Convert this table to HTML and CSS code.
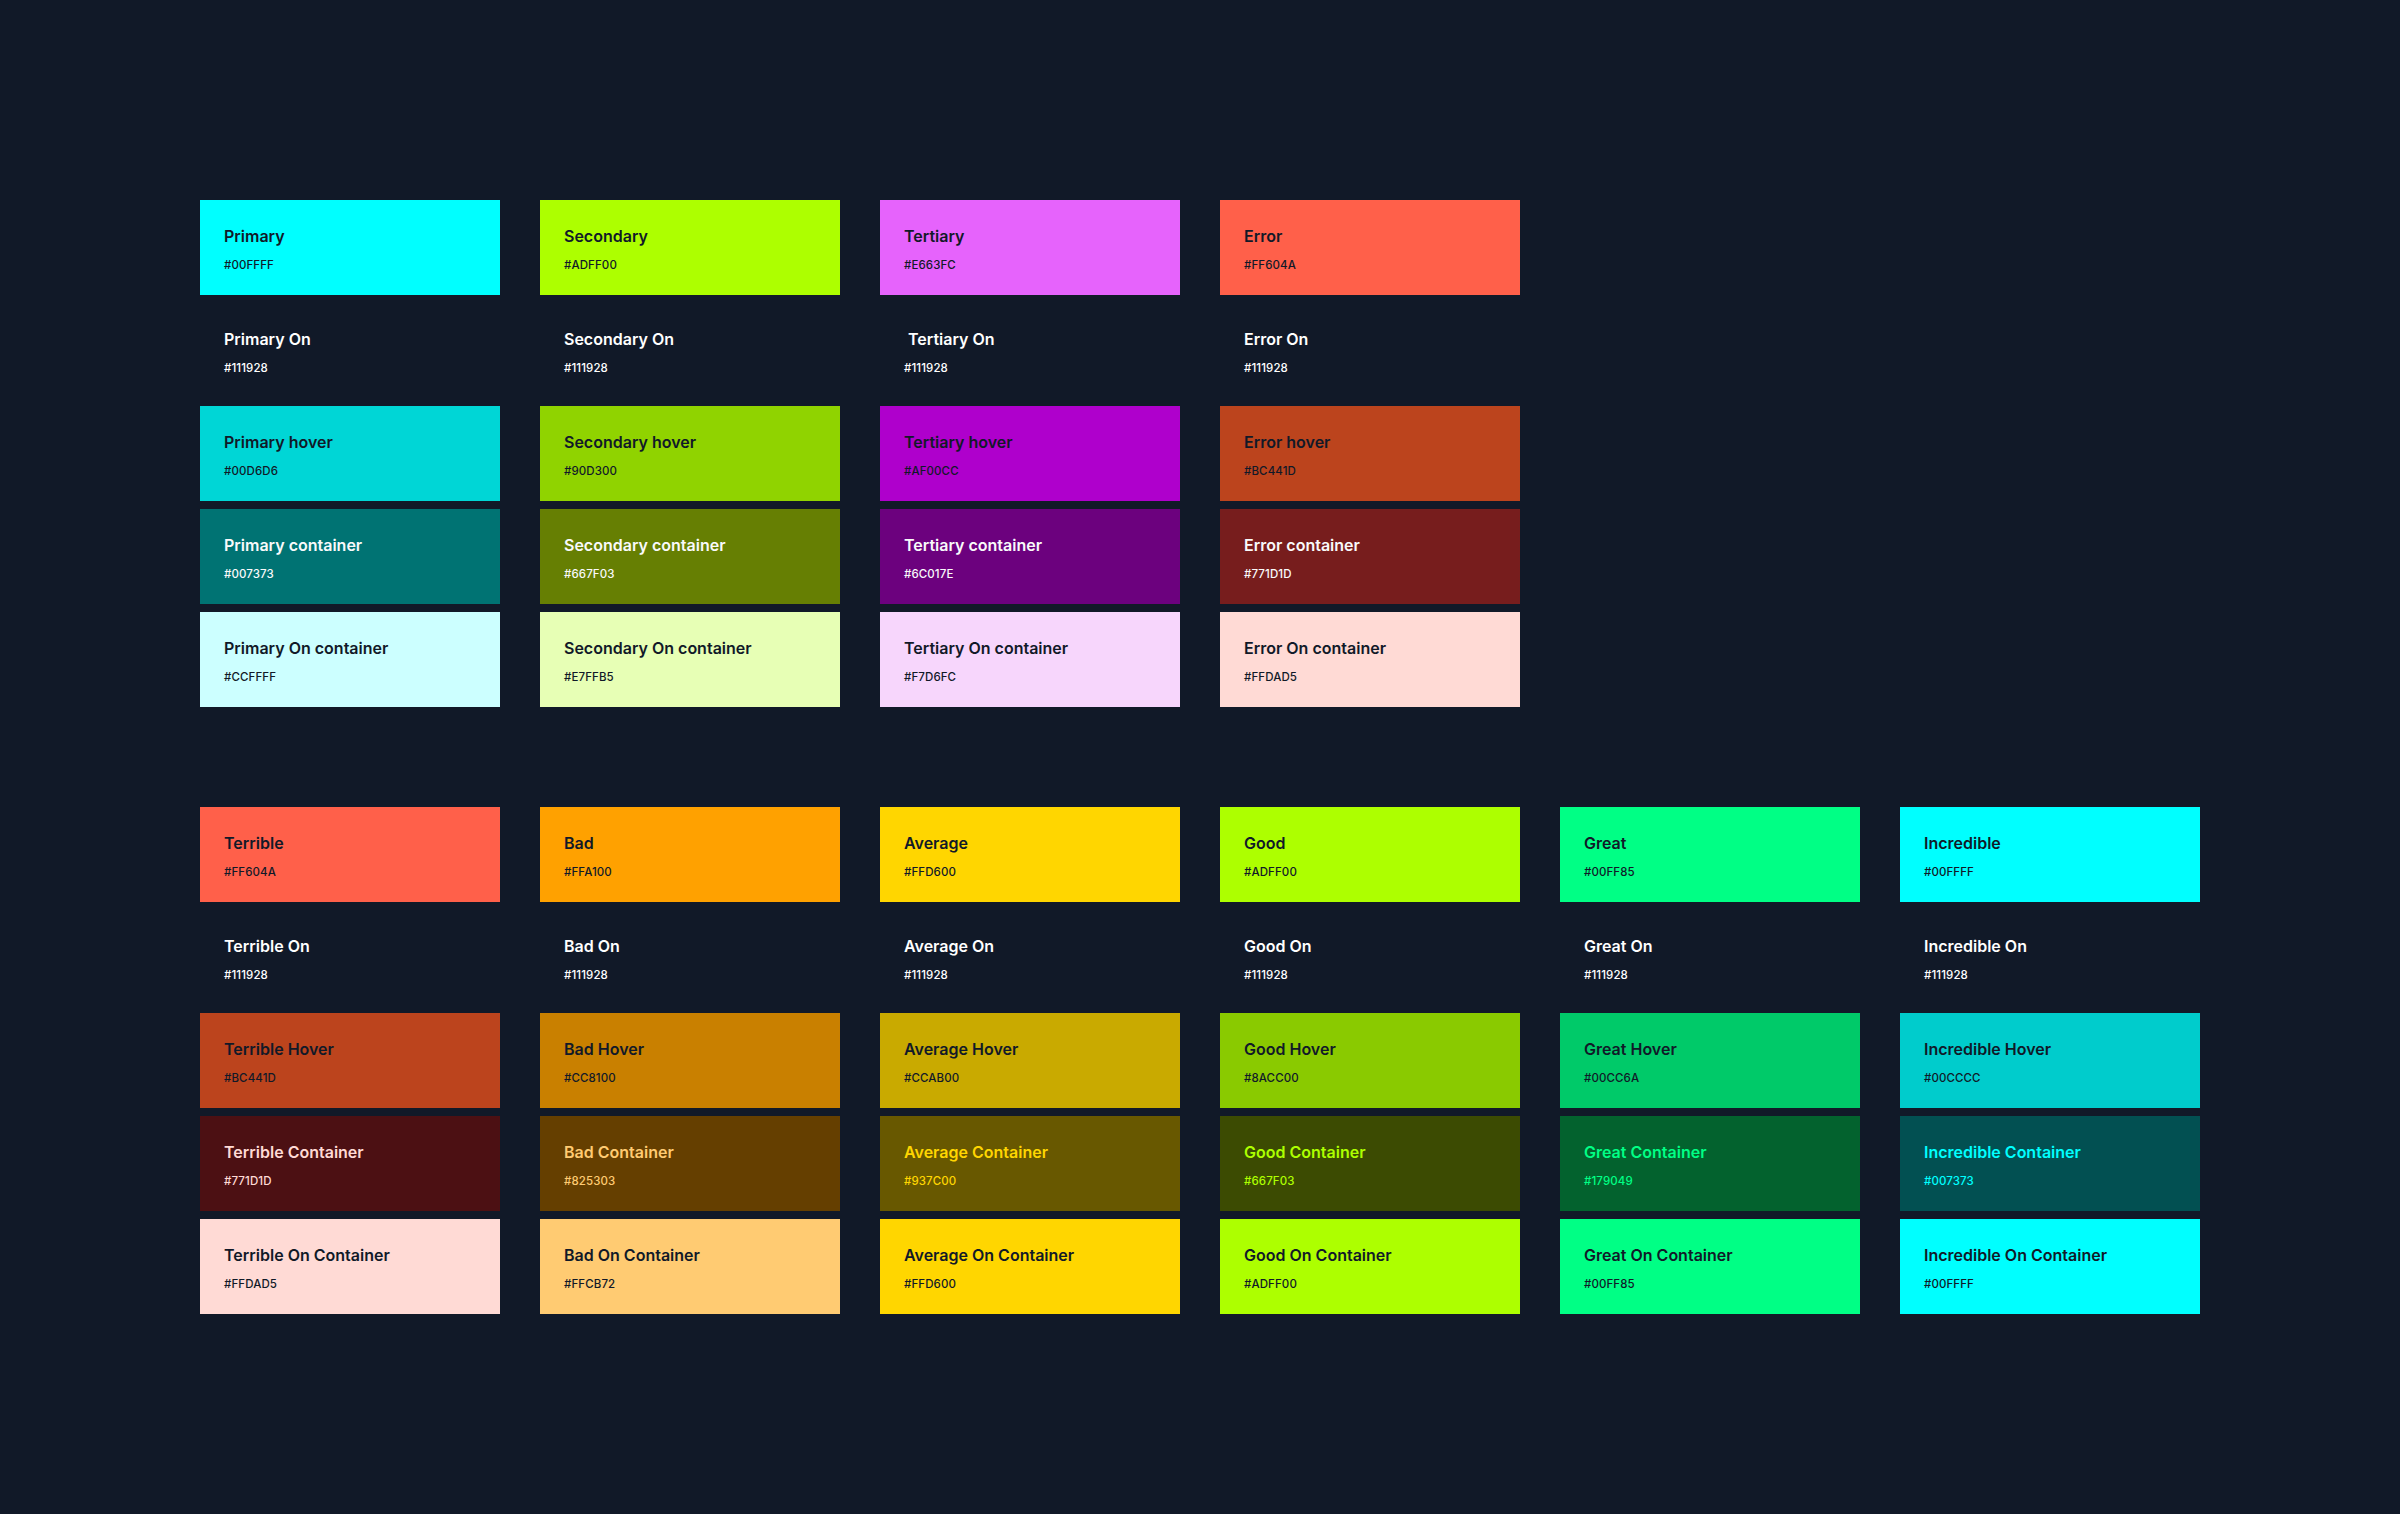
FILE: index.html
```html
<!DOCTYPE html>
<html lang="en">
<head>
<meta charset="utf-8">
<title>Color tokens</title>
<link rel="stylesheet" href="styles.css">
</head>
<body>
<main class="page">
  <section class="palette">
    <div class="col primary">
      <div class="card base"><div class="name">Primary</div><div class="hex">#00FFFF</div></div>
      <div class="card on"><div class="name">Primary On</div><div class="hex">#111928</div></div>
      <div class="card hover"><div class="name">Primary hover</div><div class="hex">#00D6D6</div></div>
      <div class="card cont"><div class="name">Primary container</div><div class="hex">#007373</div></div>
      <div class="card oncont"><div class="name">Primary On container</div><div class="hex">#CCFFFF</div></div>
    </div>
    <div class="col secondary">
      <div class="card base"><div class="name">Secondary</div><div class="hex">#ADFF00</div></div>
      <div class="card on"><div class="name">Secondary On</div><div class="hex">#111928</div></div>
      <div class="card hover"><div class="name">Secondary hover</div><div class="hex">#90D300</div></div>
      <div class="card cont"><div class="name">Secondary container</div><div class="hex">#667F03</div></div>
      <div class="card oncont"><div class="name">Secondary On container</div><div class="hex">#E7FFB5</div></div>
    </div>
    <div class="col tertiary">
      <div class="card base"><div class="name">Tertiary</div><div class="hex">#E663FC</div></div>
      <div class="card on"><div class="name">&nbsp;Tertiary On</div><div class="hex">#111928</div></div>
      <div class="card hover"><div class="name">Tertiary hover</div><div class="hex">#AF00CC</div></div>
      <div class="card cont"><div class="name">Tertiary container</div><div class="hex">#6C017E</div></div>
      <div class="card oncont"><div class="name">Tertiary On container</div><div class="hex">#F7D6FC</div></div>
    </div>
    <div class="col error">
      <div class="card base"><div class="name">Error</div><div class="hex">#FF604A</div></div>
      <div class="card on"><div class="name">Error On</div><div class="hex">#111928</div></div>
      <div class="card hover"><div class="name">Error hover</div><div class="hex">#BC441D</div></div>
      <div class="card cont"><div class="name">Error container</div><div class="hex">#771D1D</div></div>
      <div class="card oncont"><div class="name">Error On container</div><div class="hex">#FFDAD5</div></div>
    </div>
  </section>

  <section class="palette">
    <div class="col terrible">
      <div class="card base"><div class="name">Terrible</div><div class="hex">#FF604A</div></div>
      <div class="card on"><div class="name">Terrible On</div><div class="hex">#111928</div></div>
      <div class="card hover"><div class="name">Terrible Hover</div><div class="hex">#BC441D</div></div>
      <div class="card cont"><div class="name">Terrible Container</div><div class="hex">#771D1D</div></div>
      <div class="card oncont"><div class="name">Terrible On Container</div><div class="hex">#FFDAD5</div></div>
    </div>
    <div class="col bad">
      <div class="card base"><div class="name">Bad</div><div class="hex">#FFA100</div></div>
      <div class="card on"><div class="name">Bad On</div><div class="hex">#111928</div></div>
      <div class="card hover"><div class="name">Bad Hover</div><div class="hex">#CC8100</div></div>
      <div class="card cont"><div class="name">Bad Container</div><div class="hex">#825303</div></div>
      <div class="card oncont"><div class="name">Bad On Container</div><div class="hex">#FFCB72</div></div>
    </div>
    <div class="col average">
      <div class="card base"><div class="name">Average</div><div class="hex">#FFD600</div></div>
      <div class="card on"><div class="name">Average On</div><div class="hex">#111928</div></div>
      <div class="card hover"><div class="name">Average Hover</div><div class="hex">#CCAB00</div></div>
      <div class="card cont"><div class="name">Average Container</div><div class="hex">#937C00</div></div>
      <div class="card oncont"><div class="name">Average On Container</div><div class="hex">#FFD600</div></div>
    </div>
    <div class="col good">
      <div class="card base"><div class="name">Good</div><div class="hex">#ADFF00</div></div>
      <div class="card on"><div class="name">Good On</div><div class="hex">#111928</div></div>
      <div class="card hover"><div class="name">Good Hover</div><div class="hex">#8ACC00</div></div>
      <div class="card cont"><div class="name">Good Container</div><div class="hex">#667F03</div></div>
      <div class="card oncont"><div class="name">Good On Container</div><div class="hex">#ADFF00</div></div>
    </div>
    <div class="col great">
      <div class="card base"><div class="name">Great</div><div class="hex">#00FF85</div></div>
      <div class="card on"><div class="name">Great On</div><div class="hex">#111928</div></div>
      <div class="card hover"><div class="name">Great Hover</div><div class="hex">#00CC6A</div></div>
      <div class="card cont"><div class="name">Great Container</div><div class="hex">#179049</div></div>
      <div class="card oncont"><div class="name">Great On Container</div><div class="hex">#00FF85</div></div>
    </div>
    <div class="col incredible">
      <div class="card base"><div class="name">Incredible</div><div class="hex">#00FFFF</div></div>
      <div class="card on"><div class="name">Incredible On</div><div class="hex">#111928</div></div>
      <div class="card hover"><div class="name">Incredible Hover</div><div class="hex">#00CCCC</div></div>
      <div class="card cont"><div class="name">Incredible Container</div><div class="hex">#007373</div></div>
      <div class="card oncont"><div class="name">Incredible On Container</div><div class="hex">#00FFFF</div></div>
    </div>
  </section>
</main>
</body>
</html>
```

FILE: styles.css
```css
* {
  box-sizing: border-box;
}

html, body {
  margin: 0;
  padding: 0;
  background: #111928;
}

body {
  font-family: Inter, "Liberation Sans", sans-serif;
  color: #111928;
  min-height: 1514px;
}

.page {
  padding: 200px 200px 0 200px;
  display: flex;
  flex-direction: column;
  gap: 100px;
}

.palette {
  display: grid;
  grid-template-columns: repeat(6, 300px);
  column-gap: 40px;
}

.col {
  display: flex;
  flex-direction: column;
  gap: 8px;
}

.card {
  height: 95px;
  padding: 26px 24px 0 24px;
}

.name {
  font-size: 16px;
  line-height: 20px;
  font-weight: 600;
  white-space: nowrap;
}

.hex {
  margin-top: 12px;
  font-size: 11.5px;
  line-height: 14px;
  font-weight: 500;
  letter-spacing: 0.1px;
}

.base { background: var(--base); }
.on { background: transparent; color: #ffffff; }
.hover { background: var(--hover); }
.cont { background: var(--cont); color: var(--cont-text); }
.oncont { background: var(--oncont); }

.primary {
  --base: #00ffff; --hover: #00d6d6; --cont: #007373; --oncont: #ccffff; --cont-text: #f9fafb;
}
.secondary {
  --base: #adff00; --hover: #90d300; --cont: #667f03; --oncont: #e7ffb5; --cont-text: #f9fafb;
}
.tertiary {
  --base: #e663fc; --hover: #af00cc; --cont: #6c017e; --oncont: #f7d6fc; --cont-text: #f9fafb;
}
.error {
  --base: #ff604a; --hover: #bc441d; --cont: #771d1d; --oncont: #ffdad5; --cont-text: #f9fafb;
}

.terrible {
  --base: #ff604a; --hover: #bc441d; --cont: #4c1013; --oncont: #ffdad5; --cont-text: #ffdad5;
}
.bad {
  --base: #ffa100; --hover: #c98000; --cont: #653f00; --oncont: #ffcb72; --cont-text: #ffcb72;
}
.average {
  --base: #ffd600; --hover: #c9aa00; --cont: #685800; --oncont: #ffd600; --cont-text: #ffd600;
}
.good {
  --base: #adff00; --hover: #8aca00; --cont: #3c4b02; --oncont: #adff00; --cont-text: #adff00;
}
.great {
  --base: #00ff85; --hover: #00ca69; --cont: #03622e; --oncont: #00ff85; --cont-text: #00ff85;
}
.incredible {
  --base: #00ffff; --hover: #00cccc; --cont: #025052; --oncont: #00ffff; --cont-text: #00ffff;
}
```
